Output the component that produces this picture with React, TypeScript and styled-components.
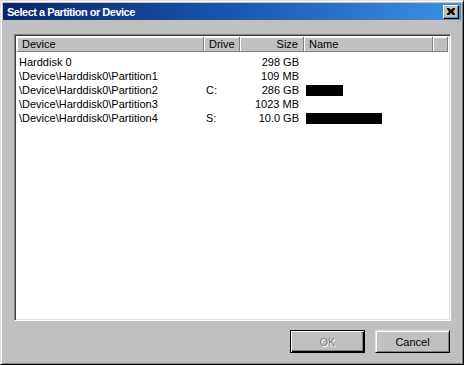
import styled, { createGlobalStyle } from "styled-components";

const Global = createGlobalStyle`
  html, body { margin: 0; padding: 0; background: #c0c0c0; }
  body { font-family: "Liberation Sans", Arial, sans-serif; font-size: 11px; }
`;

const Window = styled.div`
  width: 464px;
  height: 365px;
  box-sizing: border-box;
  background: #c0c0c0;
  border: 1px solid;
  border-color: #dfdfdf #000 #000 #dfdfdf;
  box-shadow: inset 1px 1px 0 #fff, inset -1px -1px 0 #808080;
  padding: 2px;
  display: flex;
  flex-direction: column;
`;

const TitleBar = styled.div`
  height: 18px;
  display: flex;
  align-items: center;
  justify-content: space-between;
  padding: 0 2px 0 4px;
  background: linear-gradient(90deg, #0a246a 0%, #1a56b0 50%, #3b93e0 100%);
  color: #fff;
  font-weight: bold;
  font-size: 11px;
  letter-spacing: -0.5px;
`;

const CloseButton = styled.div`
  width: 16px;
  height: 14px;
  box-sizing: border-box;
  background: #c0c0c0;
  border: 1px solid;
  border-color: #fff #000 #000 #fff;
  box-shadow: inset -1px -1px 0 #808080;
  display: flex;
  align-items: center;
  justify-content: center;
`;

const Body = styled.div`
  flex: 1;
  display: flex;
  flex-direction: column;
  padding: 14px 10px 9px 11px;
  gap: 9px;
`;

const ListView = styled.div`
  height: 287px;
  box-sizing: border-box;
  background: #fff;
  border: 1px solid;
  border-color: #808080 #fff #fff #808080;
  box-shadow: inset 1px 1px 0 #404040, inset -1px -1px 0 #dfdfdf;
  padding: 2px;
  display: flex;
  flex-direction: column;
`;

const Header = styled.div`
  display: flex;
  height: 15px;
`;

const HeaderCell = styled.div<{ $w: number; $right?: boolean }>`
  width: ${(p) => p.$w}px;
  flex: ${(p) => (p.$w ? "none" : "1")};
  box-sizing: border-box;
  background: #c0c0c0;
  border-right: 1px solid #808080;
  border-bottom: 1px solid #808080;
  box-shadow: inset 1px 1px 0 #fff;
  padding: 0 5px;
  line-height: 14px;
  text-align: ${(p) => (p.$right ? "right" : "left")};
  color: #000;
  white-space: nowrap;
`;

const Rows = styled.div`
  padding-top: 3px;
  display: flex;
  flex-direction: column;
`;

const Row = styled.div`
  display: flex;
  height: 14px;
  align-items: center;
`;

const Cell = styled.div<{ $w: number; $right?: boolean }>`
  width: ${(p) => p.$w}px;
  box-sizing: border-box;
  padding: 0 5px 0 ${(p) => (p.$right ? 5 : 2)}px;
  text-align: ${(p) => (p.$right ? "right" : "left")};
  white-space: nowrap;
  color: #000;
`;

const Redacted = styled.div`
  height: 11px;
  background: #000;
`;

const ButtonRow = styled.div`
  display: flex;
  justify-content: flex-end;
  gap: 10px;
  padding-right: 1px;
`;

const Button = styled.div<{ $default?: boolean; $disabled?: boolean }>`
  width: 75px;
  height: 23px;
  box-sizing: border-box;
  background: #c0c0c0;
  display: flex;
  align-items: center;
  justify-content: center;
  border: 1px solid #000;
  box-shadow: ${(p) =>
    p.$default
      ? "inset 1px 1px 0 #fff, inset -1px -1px 0 #000, inset -2px -2px 0 #808080"
      : "inset 1px 1px 0 #fff, inset -1px -1px 0 #808080"};
  border-color: ${(p) => (p.$default ? "#000" : "#dfdfdf #000 #000 #dfdfdf")};
  color: ${(p) => (p.$disabled ? "#808080" : "#000")};
  text-shadow: ${(p) => (p.$disabled ? "1px 1px 0 #fff" : "none")};
`;

const cols = [187, 36, 64, 129];

const rows = [
  { device: "Harddisk 0", drive: "", size: "298 GB", name: 0 },
  { device: "\\Device\\Harddisk0\\Partition1", drive: "", size: "109 MB", name: 0 },
  { device: "\\Device\\Harddisk0\\Partition2", drive: "C:", size: "286 GB", name: 37 },
  { device: "\\Device\\Harddisk0\\Partition3", drive: "", size: "1023 MB", name: 0 },
  { device: "\\Device\\Harddisk0\\Partition4", drive: "S:", size: "10.0 GB", name: 76 },
];

export default function App() {
  return (
    <>
      <Global />
      <Window>
        <TitleBar>
          <span>Select a Partition or Device</span>
          <CloseButton>
            <svg width="8" height="7" viewBox="0 0 8 7">
              <path d="M0 0h2l2 2 2-2h2v1L6 3.5 8 6v1H6L4 5 2 7H0V6l2-2.5L0 1z" fill="#000" />
            </svg>
          </CloseButton>
        </TitleBar>
        <Body>
          <ListView>
            <Header>
              <HeaderCell $w={cols[0]}>Device</HeaderCell>
              <HeaderCell $w={cols[1]}>Drive</HeaderCell>
              <HeaderCell $w={cols[2]} $right>Size</HeaderCell>
              <HeaderCell $w={cols[3]}>Name</HeaderCell>
              <HeaderCell $w={0} />
            </Header>
            <Rows>
              {rows.map((r) => (
                <Row key={r.device}>
                  <Cell $w={cols[0]}>{r.device}</Cell>
                  <Cell $w={cols[1]}>{r.drive}</Cell>
                  <Cell $w={cols[2]} $right>{r.size}</Cell>
                  <Cell $w={cols[3]}>
                    {r.name > 0 && <Redacted style={{ width: r.name }} />}
                  </Cell>
                </Row>
              ))}
            </Rows>
          </ListView>
          <ButtonRow>
            <Button $default $disabled>OK</Button>
            <Button>Cancel</Button>
          </ButtonRow>
        </Body>
      </Window>
    </>
  );
}
